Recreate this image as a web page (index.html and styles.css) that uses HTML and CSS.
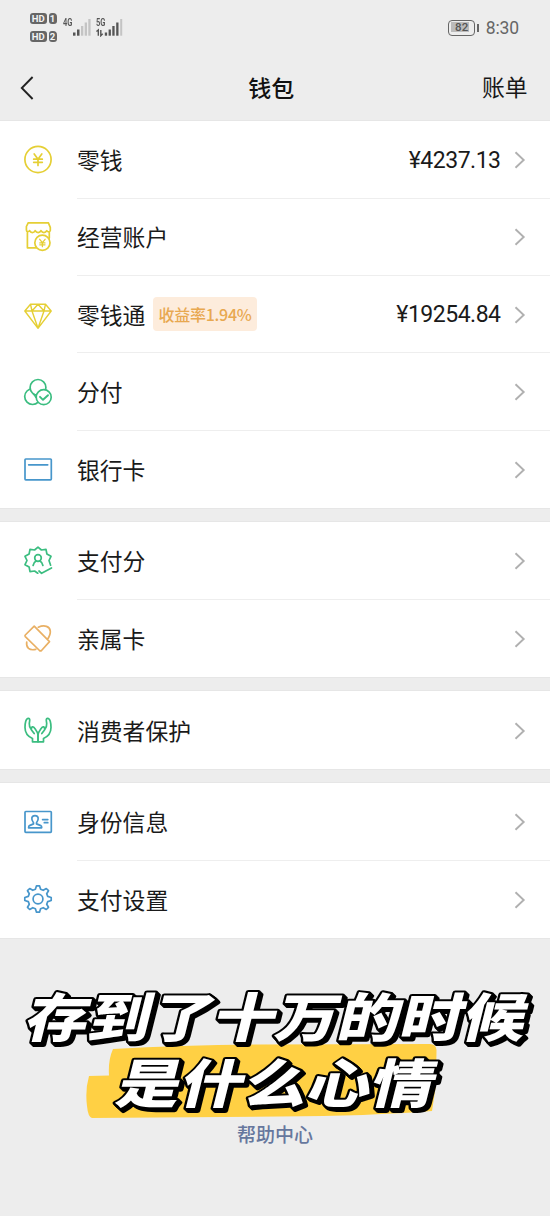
FILE: index.html
```html
<!DOCTYPE html>
<html lang="zh-CN">
<head>
<meta charset="utf-8">
<title>钱包</title>
<link rel="stylesheet" href="styles.css">
</head>
<body>
<svg class="defs" width="0" height="0"><symbol id="chev" viewBox="0 0 12 18"><path d="M1.5 1.2 9.7 9 1.5 16.8" fill="none" stroke="#b0b0b0" stroke-width="1.9"/></symbol></svg>
<div class="screen">
  <header class="top">
    <div class="status">
      <div class="hds">
        <div class="hd"><b>HD</b><i>1</i></div>
        <div class="hd"><b>HD</b><i>2</i></div>
      </div>
      <div class="net net4"><span>4G</span>
        <svg width="19" height="18" viewBox="0 0 19 18"><g fill="#555"><rect x="1" y="13.5" width="2.5" height="3.2"/><rect x="5" y="10.5" width="2.5" height="6.2"/></g><g fill="#c4c4c4"><rect x="9" y="7" width="2.3" height="9.7"/><rect x="12.7" y="3.5" width="2.3" height="13.2"/><rect x="16.3" y="0" width="2.3" height="16.7"/></g></svg>
      </div>
      <div class="net net5"><span>5G</span>
        <svg width="27" height="18" viewBox="0 0 27 18"><path d="M.4 12.500 2.300 11v5.700M4.800 11v5.700l1.900-2" fill="none" stroke="#555" stroke-width="1.4"/><g fill="#555"><rect x="8.8" y="13.5" width="2.3" height="3.2"/><rect x="12.6" y="10.5" width="2.3" height="6.2"/><rect x="16.3" y="7" width="2.3" height="9.7"/><rect x="20.2" y="3.5" width="2.3" height="13.2"/></g><rect x="24.2" y="0" width="2" height="16.7" fill="#c4c4c4"/></svg>
      </div>
      <div class="battery"><span>82</span></div><div class="nub"></div>
      <time>8:30</time>
    </div>
    <nav class="bar">
      <svg width="14" height="24" viewBox="0 0 14 24"><path d="M12.6 1 1.8 12l10.8 11" fill="none" stroke="#222" stroke-width="1.9"/></svg>
      <h1>钱包</h1>
      <a>账单</a>
    </nav>
  </header>

  <main>
    <section>
      <div class="row yellow">
        <svg class="ic" viewBox="0 0 30 30"><circle cx="15" cy="14.5" r="13.1"/><path d="m11.2 9 3.8 5.2L18.8 9M15 14v6.5M10.7 14.2h8.6M10.7 17.3h8.6"/></svg>
        <div class="cell"><span class="label">零钱</span><span class="amt">¥4237.13</span><svg class="chev"><use href="#chev"/></svg></div>
      </div>
      <div class="row yellow">
        <svg class="ic" viewBox="0 0 30 30"><path d="M4.4 9.8v16H13M26.3 9.8v6.3M5.2.8h20.2l1.9 4.5v3.1c-.6 2-2.4 1.9-3.5.2-1.3 2.6-4.5 2.6-5.8 0-1.2 2.6-4.5 2.6-5.8 0-1.4 2.6-4.4 2.6-5.6 0-1 1.5-3.2 1.5-3.2-.6V4.5z"/><circle cx="19.4" cy="20.7" r="7.6"/><path d="m16.7 17.3 2.7 3.4 2.7-3.4M19.4 20.5v4.2M16.8 20.9H22M16.8 22.8H22" stroke-width="1.3"/></svg>
        <div class="cell"><span class="label">经营账户</span><svg class="chev"><use href="#chev"/></svg></div>
      </div>
      <div class="row yellow">
        <svg class="ic" viewBox="0 0 30 30"><path d="M7.5 4.2h15L28.2 11 15 28.3 1.8 11zM1.8 11h26.4M15 4.2 9 11l6 17.3L21 11zM7.5 4.2 9 11m13.5-6.8L21 11" stroke-width="1.4"/></svg>
        <div class="cell"><span class="label">零钱通</span><span class="tag">收益率1.94%</span><span class="amt">¥19254.84</span><svg class="chev"><use href="#chev"/></svg></div>
      </div>
      <div class="row green">
        <svg class="ic" viewBox="0 0 30 30"><circle cx="9.6" cy="19.6" r="7.9"/><circle cx="15" cy="10.4" r="7.9" fill="#fff"/><path d="M10.500 17.200q1.500 1.200 2.300 2.800"/><circle cx="20.7" cy="20.2" r="7.5" fill="#fff"/><path d="m17 19.8 3 3 5-4.6" stroke-width="1.9"/></svg>
        <div class="cell"><span class="label">分付</span><svg class="chev"><use href="#chev"/></svg></div>
      </div>
      <div class="row blue">
        <svg class="ic" viewBox="0 0 30 30"><rect x="2" y="5" width="26.3" height="20.8" rx=".8"/><path d="M5.7 10.8h19"/></svg>
        <div class="cell"><span class="label">银行卡</span><svg class="chev"><use href="#chev"/></svg></div>
      </div>
    </section>

    <section>
      <div class="row green">
        <svg class="ic" viewBox="0 0 30 30"><path d="m27.6 19.2-1.6-4.7 2-4.2-4.1-2.3-.9-4.6-4.6.6L15 1.2 11.6 4 7 3.4 6.100 8 2 10.300 4 14.500 2 18.700 6.100 21 7 25.600 11.600 25 14.800 27.200M16 25l2.600 2.300L28.500 22"/><circle cx="15" cy="12" r="3.300"/><path d="M13.300 14.800c-2 1.200-2.800 2.300-3.200 4.700M16.700 14.800c2 1.200 2.800 2.300 3.200 4.700"/></svg>
        <div class="cell"><span class="label">支付分</span><svg class="chev"><use href="#chev"/></svg></div>
      </div>
      <div class="row orange">
        <svg class="ic" viewBox="0 0 30 30"><path d="M11.200 3.200 26.500 18.600 18.500 27.500Q17.500 28.400 16.500 27.500L2.300 13.600Q1.600 12.800 2.300 12zM15.300 4.200c6.300-2.700 11.500-.8 12 4 .2 2.600-1.100 5.600-2.900 8.200M3.700 19.200c-.8 5.500 2.600 8.600 9 7.200"/></svg>
        <div class="cell"><span class="label">亲属卡</span><svg class="chev"><use href="#chev"/></svg></div>
      </div>
    </section>

    <section>
      <div class="row green">
        <svg class="ic" viewBox="0 0 30 30"><g id="hand"><path d="M15 26.800H9.500V23.500C5 21.500 2 18 2 12.500c0-4 .8-9.400 3.500-9.200 2 .2 1 3.200.8 5.200-.3 3 .4 4.300 2.200 6.500l2.700 3.600M8.500 13.800c-.5-2 1.800-2.700 3-.8 1.800 2.500 3.500 4.300 3.500 7.300v6.500"/></g><use href="#hand" transform="translate(30 0) scale(-1 1)"/></svg>
        <div class="cell"><span class="label">消费者保护</span><svg class="chev"><use href="#chev"/></svg></div>
      </div>
    </section>

    <section>
      <div class="row blue">
        <svg class="ic" viewBox="0 0 30 30"><rect x="2" y="4.500" width="26.300" height="20.800" rx=".8"/><path d="M10.500 15.700C7.800 12.500 8.300 8.600 12 8.600s4.200 3.900 1.500 7.100v1.200l4.300 1.700c.8.400 1 1 .9 2.200H5.600c0-1.200.1-1.800.9-2.200l4-1.700zM19.600 12.600h5.200M21.300 15.700h3.500"/></svg>
        <div class="cell"><span class="label">身份信息</span><svg class="chev"><use href="#chev"/></svg></div>
      </div>
      <div class="row blue">
        <svg class="ic" viewBox="-15 -15 30 30"><path d="M-1.500-13.200h3L2.600-9.700 5.200-8.700 8.300-10.500 10.500-8.300 8.700-5.200 9.700-2.600 13.200-1.500v3L9.700 2.600 8.700 5.200 10.500 8.300 8.300 10.500 5.200 8.700 2.600 9.700 1.500 13.200h-3L-2.600 9.700-5.200 8.700-8.300 10.500-10.500 8.300-8.700 5.200-9.700 2.600-13.200 1.500v-3L-9.700-2.600-8.700-5.200-10.500-8.300-8.300-10.500-5.200-8.700-2.600-9.700z"/><circle r="4.900"/></svg>
        <div class="cell"><span class="label">支付设置</span><svg class="chev"><use href="#chev"/></svg></div>
      </div>
    </section>
  </main>

  <footer><a>帮助中心</a></footer>

  <svg class="caption" width="550" height="150" viewBox="0 975 550 150">
    <path d="M113 1049Q180 1045 260 1044.500L430 1044Q436 1044 436.500 1050L436 1085 432 1111Q370 1116 280 1116.500L92 1118Q88 1117 87 1106Q85 1090 89 1076L109 1075.500Q108 1060 113 1049Z" fill="#ffd044"/>
    <g class="slant">
      <text transform="translate(23 1036.500) skewX(-14) scale(1.190 1)">存到了十万的时候</text>
      <text transform="translate(114 1102.500) skewX(-14) scale(1.210 1)">是什么心情</text>
    </g>
  </svg>
</div>
</body>
</html>
```
FILE: styles.css
```css
* { box-sizing: border-box; }
body {
  margin: 0;
  background: #ededed;
  color: #1a1a1a;
  font-family: "Noto Sans CJK SC", sans-serif;
}
.defs { display: block; height: 0; }
.screen { position: relative; width: 550px; height: 1216px; overflow: hidden; }

.top { height: 121px; border-bottom: 1px solid #e0e0e0; }
.status {
  height: 55px;
  padding: 0 31px 0 30px;
  display: flex;
  align-items: center;
  color: #555;
  font-family: Roboto, sans-serif;
}
.hds { display: flex; flex-direction: column; gap: 7px; width: 27px; }
.hd { display: flex; gap: 2px; height: 11px; }
.hd b, .hd i {
  background: #666;
  color: #f4f4f4;
  border-radius: 3px;
  font: bold 9.500px/11px Roboto, sans-serif;
  text-align: center;
}
.hd b { width: 16.500px; }
.hd i { width: 8px; border-top-right-radius: 4px; }
.net { display: flex; height: 18px; }
.net span { font: 600 10.500px/10px Roboto, sans-serif; transform: scaleX(.72); transform-origin: left; height: 10px; width: 9px; margin-top: -1px; }
.net4 { margin-left: 6px; }
.net5 { margin-left: 5px; }
.net5 svg { margin-left: -9px; }
.battery {
  margin-left: auto;
  width: 27px;
  height: 16px;
  padding: 1.5px;
  border: 1.5px solid #666;
  border-radius: 4px;
  font: 500 11.500px/10px Roboto, sans-serif;
  text-align: center;
}
.battery span { display: block; background: linear-gradient(90deg, #bbb 82%, transparent 82%); line-height: 11px; height: 10px; }
.nub { width: 2px; height: 8px; margin-left: 1.500px; background: #666; }
.status time { margin-left: 7px; font-size: 17.500px; letter-spacing: -.1px; color: #666; }

.bar { height: 65px; padding: 0 22.500px 0 20px; display: grid; grid-template-columns: 47px 1fr 52px; align-items: center; }
.bar h1 { margin: 0; padding-bottom: 2px; font-size: 23px; font-weight: 500; text-align: center; color: #111; line-height: 32px; }
.bar a { font-size: 22.800px; text-align: right; color: #181818; line-height: 32px; white-space: nowrap; padding-bottom: 1px; }

main { display: flex; flex-direction: column; gap: 14.500px; padding-top: .4px; }
section { background: #fff; box-shadow: 0 0 0 1px #e6e6e6; }
.row { display: flex; height: 77.300px; padding-left: 23.300px; align-items: center; }
.ic { width: 30px; height: 30px; fill: none; stroke: currentColor; stroke-width: 1.700; stroke-linejoin: round; stroke-linecap: round; flex: none; }
.cell { flex: 1; height: 100%; margin-left: 23.700px; padding-right: 24px; display: flex; align-items: center; border-bottom: 1px solid #eee; }
.row:last-child .cell { border-bottom: 0; }
.label { font-size: 22.800px; line-height: 32px; color: #1a1a1a; padding-top: 1px; }
.tag {
  height: 34px;
  margin-left: 7.500px;
  padding: 0 5.500px;
  border-radius: 4px;
  background: #fdecdc;
  color: #e8a850;
  font-size: 16px;
  font-weight: 500;
  line-height: 35px;
  letter-spacing: -.25px;
}
.amt { margin-left: auto; color: #1a1a1a; font: 23px/32px Roboto, sans-serif; letter-spacing: -.5px; padding-top: 2px; }
.chev { width: 12px; height: 18px; margin-left: auto; position: relative; top: .5px; }
.amt + .chev { margin-left: 13.500px; }
.yellow { color: #e5cf35; }
.green { color: #3bbd80; }
.blue { color: #4796cb; }
.orange { color: #e9b064; }

footer { padding-top: 181px; text-align: center; font-size: 19px; font-weight: 500; line-height: 30px; color: #66779d; }

/* promotional lettering floating above the list */
.caption { position: absolute; left: 0; top: 975px; }
.slant { filter: drop-shadow(2px 2px 0 #000) drop-shadow(1.500px 1px 0 #000); }
.slant text {
  font: 900 52.500px "Noto Sans CJK SC", sans-serif;
  fill: #fff;
  stroke: #000;
  stroke-width: 4px;
  stroke-linejoin: round;
  paint-order: stroke;
}
```
